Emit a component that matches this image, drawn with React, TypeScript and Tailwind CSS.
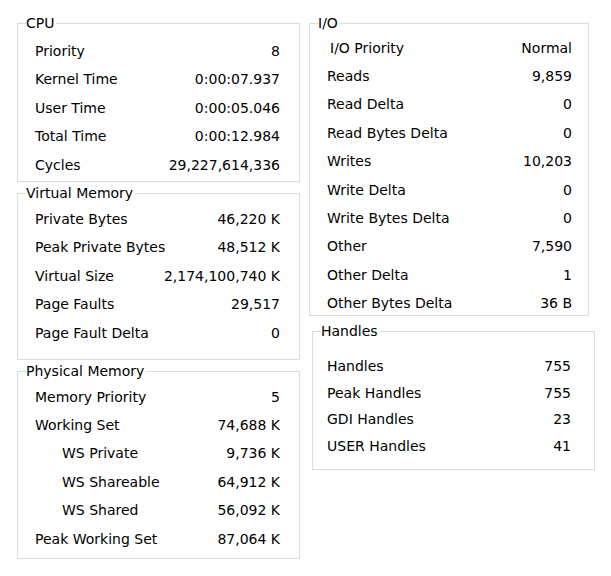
import { FC, ReactNode } from 'react'

type Row = { label: string; value: string; indent?: boolean }

const cpu: Row[] = [
  { label: 'Priority', value: '8' },
  { label: 'Kernel Time', value: '0:00:07.937' },
  { label: 'User Time', value: '0:00:05.046' },
  { label: 'Total Time', value: '0:00:12.984' },
  { label: 'Cycles', value: '29,227,614,336' },
]

const virtualMemory: Row[] = [
  { label: 'Private Bytes', value: '46,220 K' },
  { label: 'Peak Private Bytes', value: '48,512 K' },
  { label: 'Virtual Size', value: '2,174,100,740 K' },
  { label: 'Page Faults', value: '29,517' },
  { label: 'Page Fault Delta', value: '0' },
]

const physicalMemory: Row[] = [
  { label: 'Memory Priority', value: '5' },
  { label: 'Working Set', value: '74,688 K' },
  { label: 'WS Private', value: '9,736 K', indent: true },
  { label: 'WS Shareable', value: '64,912 K', indent: true },
  { label: 'WS Shared', value: '56,092 K', indent: true },
  { label: 'Peak Working Set', value: '87,064 K' },
]

const io: Row[] = [
  { label: 'Reads', value: '9,859' },
  { label: 'Read Delta', value: '0' },
  { label: 'Read Bytes Delta', value: '0' },
  { label: 'Writes', value: '10,203' },
  { label: 'Write Delta', value: '0' },
  { label: 'Write Bytes Delta', value: '0' },
  { label: 'Other', value: '7,590' },
  { label: 'Other Delta', value: '1' },
  { label: 'Other Bytes Delta', value: '36 B' },
]

const handles: Row[] = [
  { label: 'Handles', value: '755' },
  { label: 'Peak Handles', value: '755' },
  { label: 'GDI Handles', value: '23' },
  { label: 'USER Handles', value: '41' },
]

const GroupBox: FC<{ title: string; className: string; children: ReactNode }> = ({ title, className, children }) => (
  <fieldset className={`border border-[#dcdcdc] ${className}`}>
    <legend className="ml-2 px-0 pr-[2px] leading-[18px]">{title}</legend>
    {children}
  </fieldset>
)

const Rows: FC<{ rows: Row[]; rowClass: string; labelPad: string; valueRight: string }> = ({ rows, rowClass, labelPad, valueRight }) => (
  <div className="flex flex-col">
    {rows.map((row) => (
      <div key={row.label} className={`flex items-center justify-between ${rowClass} ${valueRight}`}>
        <span className={row.indent ? 'pl-[44px]' : labelPad}>{row.label}</span>
        <span>{row.value}</span>
      </div>
    ))}
  </div>
)

export default function App() {
  return (
    <div
      className="w-[611px] h-[576px] bg-white text-black text-[14px] flex gap-[9px] pl-[17px] pt-[14px]"
      style={{ fontFamily: '"DejaVu Sans", Verdana, sans-serif' }}
    >
      {/* Left column */}
      <div className="flex flex-col w-[283px] gap-[2px]">
        <GroupBox title="CPU" className="h-[168px] pt-[5px]">
          <Rows rows={cpu} rowClass="h-[28.5px]" labelPad="pl-[17px]" valueRight="pr-[19px]" />
        </GroupBox>
        <GroupBox title="Virtual Memory" className="h-[176px] pt-[3px]">
          <Rows rows={virtualMemory} rowClass="h-[28.5px]" labelPad="pl-[17px]" valueRight="pr-[19px]" />
        </GroupBox>
        <GroupBox title="Physical Memory" className="h-[197px] pt-[3px]">
          <Rows rows={physicalMemory} rowClass="h-[28.4px]" labelPad="pl-[17px]" valueRight="pr-[19px]" />
        </GroupBox>
      </div>

      {/* Right column */}
      <div className="flex flex-col w-[286px] gap-[6px]">
        <GroupBox title="I/O" className="w-[280px] h-[302px] pt-[2px]">
          <div className="flex items-center justify-between h-[28.4px] pr-[16px]">
            <span className="pl-[20px]">I/O Priority</span>
            <span>Normal</span>
          </div>
          <Rows rows={io} rowClass="h-[28.4px]" labelPad="pl-[17px]" valueRight="pr-[16px]" />
        </GroupBox>
        <GroupBox title="Handles" className="ml-[3px] w-[283px] h-[148px] pt-[13px]">
          <Rows rows={handles} rowClass="h-[26.7px]" labelPad="pl-[14px]" valueRight="pr-[23px]" />
        </GroupBox>
      </div>
    </div>
  )
}
